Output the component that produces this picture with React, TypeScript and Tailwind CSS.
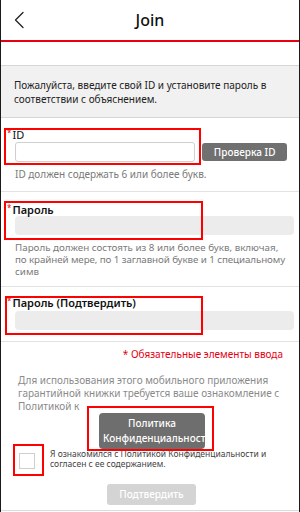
import React from "react";

function Label({ text, bold }: { text: string; bold?: boolean }) {
  return (
    <div className="flex items-start pl-[6px] h-[12px]">
      <span className="text-[#e60012] text-[8px] leading-[8px] mr-[1px] mt-[0px]">*</span>
      <span className={`text-[11px] leading-[12px] text-[#111] ${bold ? "font-semibold" : ""}`}>{text}</span>
    </div>
  );
}

export default function App() {
  return (
    <div
      className="w-[300px] h-[512px] bg-white border-x border-[#1a1a1a] relative overflow-hidden flex flex-col [&>*]:shrink-0"
      style={{ fontFamily: '"Noto Sans", "Open Sans", sans-serif' }}
    >
      {/* header */}
      <div className="h-[40px] grid grid-cols-[40px_1fr_40px] items-center">
        <div className="flex items-center pl-[12px]">
          <svg width="12" height="18" viewBox="0 0 12 18" fill="none">
            <path d="M10 1.5 L2.5 9 L10 16.5" stroke="#222" strokeWidth="1.3" strokeLinecap="round" strokeLinejoin="round" />
          </svg>
        </div>
        <div className="text-center text-[16px] font-medium text-[#111]">Join</div>
        <div />
      </div>
      <div className="h-[2px] bg-[#e60012]" />
      <div className="h-[23px]" />

      {/* intro */}
      <div className="border-y border-[#d6d6d6] bg-[#f1f1f1] px-[13px] pt-[12px] pb-[11px] text-[10px] leading-[14px] text-[#222]">
        Пожалуйста, введите свой ID и установите пароль в соответствии с объяснением.
      </div>

      {/* ID */}
      <div className="relative pt-[11px] pb-[11px] border-b border-[#e2e2e2]">
        <div className="absolute left-[3px] top-[10px] w-[197px] h-[37px] border-2 border-[#ff0000]" />
        <Label text="ID" />
        <div className="flex items-center gap-[7px] pl-[14px] pr-[12px] mt-[1px]">
          <div className="w-[181px] h-[20px] bg-white border border-[#cfcfcf] rounded-[3px]" />
          <div className="w-[85px] h-[18px] bg-[#707070] rounded-[3px] text-white text-[10px] font-medium leading-[18px] text-center">
            Проверка ID
          </div>
        </div>
        <div className="pl-[14px] mt-[6px] text-[10px] leading-[12px] text-[#7a7a7a]">
          ID должен содержать 6 или более букв.
        </div>
      </div>

      {/* Password */}
      <div className="relative pt-[12px] pb-[8px] border-b border-[#e2e2e2]">
        <div className="absolute left-[3px] top-[9px] w-[199px] h-[39px] border-2 border-[#ff0000]" />
        <Label text="Пароль" bold />
        <div className="pl-[14px] pr-[5px]">
          <div className="h-[19px] bg-[#ececec] rounded-[4px]" />
        </div>
        <div className="pl-[14px] mt-[7px] text-[9.8px] leading-[12px] text-[#7a7a7a] whitespace-nowrap">
          <div>Пароль должен состоять из 8 или более букв, включая,</div>
          <div className="tracking-[-0.1px]">по крайней мере, по 1 заглавной букве и 1 специальному</div>
          <div>симв</div>
        </div>
      </div>

      {/* Confirm password */}
      <div className="relative pt-[10px] pb-[11px] border-b border-[#e2e2e2]">
        <div className="absolute left-[4px] top-[9px] w-[198px] h-[39px] border-2 border-[#ff0000]" />
        <Label text="Пароль (Подтвердить)" bold />
        <div className="pl-[14px] pr-[5px] mt-[2px]">
          <div className="h-[19px] bg-[#ececec] rounded-[4px]" />
        </div>
      </div>

      <div className="text-right pr-[16px] mt-[5px] text-[10px] leading-[14px] text-[#e60012]">
        * Обязательные элементы ввода
      </div>

      <div className="px-[17px] mt-[13px] text-[10px] leading-[13px] text-[#8a8a8a]">
        Для использования этого мобильного приложения гарантийной книжки требуется ваше ознакомление с Политикой к
      </div>

      {/* policy button */}
      <div className="flex pl-[98px]">
        <div className="relative">
          <div className="absolute -left-[12px] -top-[7px] w-[127px] h-[45px] border-2 border-[#ff0000]" />
          <div className="w-[106px] h-[36px] bg-[#6e6e6e] rounded-[4px] overflow-hidden px-[4px] py-[3px] text-white text-[10px] font-medium leading-[15px] whitespace-nowrap">
            <div className="text-center">Политика</div>
            <div>Конфиденциальност</div>
          </div>
        </div>
      </div>

      {/* agree row */}
      <div className="flex items-start mt-[4px] pl-[18px]">
        <div className="relative shrink-0">
          <div className="absolute -left-[6px] -top-[9px] w-[31px] h-[32px] border-2 border-[#ff0000]" />
          <div className="w-[16px] h-[16px] bg-white border border-[#cfcfcf]" />
        </div>
        <div className="pl-[15px] -mt-[4px] text-[8.5px] leading-[10px] text-[#444]">
          Я ознакомился с Политикой Конфиденциальности и согласен с ее содержанием.
        </div>
      </div>

      <div className="flex pl-[106px] mt-[15px]">
        <div className="w-[89px] h-[21px] bg-[#d4d4d4] rounded-[3px] text-white text-[10px] font-medium leading-[21px] text-center">
          Подтвердить
        </div>
      </div>

      <div className="absolute left-0 right-0 bottom-[1px] h-px bg-[#dcdcdc]" />
    </div>
  );
}
